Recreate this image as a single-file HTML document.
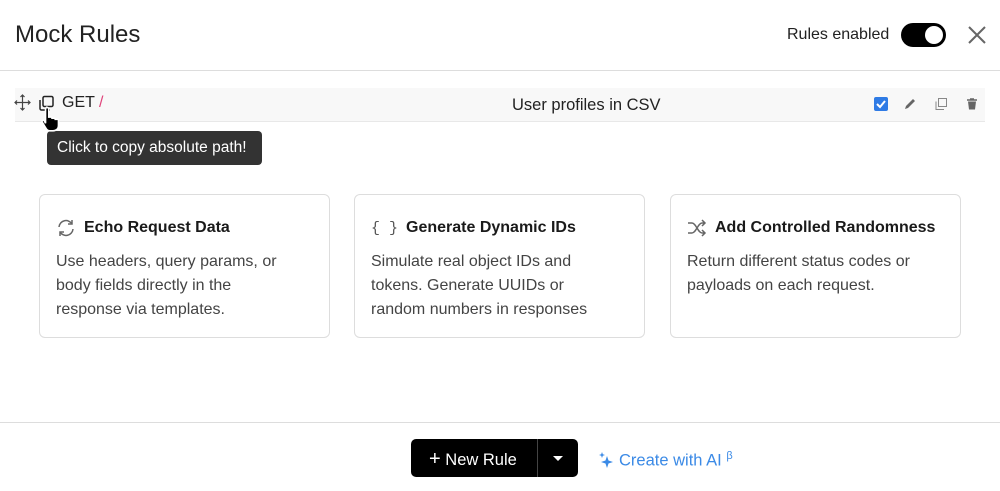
<!DOCTYPE html>
<html><head><style>
*{box-sizing:border-box;margin:0;padding:0}
body{width:1000px;height:491px;background:#fff;font-family:"Liberation Sans",sans-serif;color:#1a1a1a;position:relative;overflow:hidden}
.abs{position:absolute}
h1{position:absolute;left:15px;top:21px;font-size:24px;font-weight:normal;color:#222}
.card{position:absolute;top:194px;width:291px;height:144px;border:1px solid #ddd;border-radius:6px;padding:20px 16px}
.card .t{font-size:16px;font-weight:bold;display:flex;align-items:center;gap:8px;height:24px;position:relative;top:1px}
.card .d{margin-top:11px;font-size:16px;line-height:24px;color:#444;white-space:nowrap}
</style></head><body>
<h1>Mock Rules</h1>
<div class="abs" style="left:787px;top:26px;font-size:16px;color:#222">Rules enabled</div>
<div class="abs" style="left:901px;top:23px;width:45px;height:24px;border-radius:12px;background:#000"><div class="abs" style="left:24px;top:3px;width:18px;height:18px;border-radius:50%;background:#fff"></div></div>
<svg class="abs" style="left:967px;top:25px" width="20" height="20" viewBox="0 0 20 20"><path d="M2 2L18 18M18 2L2 18" stroke="#666" stroke-width="2"/></svg>
<div class="abs" style="left:0;top:70px;width:1000px;height:1px;background:#ddd"></div>

<div class="abs" style="left:15px;top:88px;width:970px;height:34px;background:#f8f8f8;border-bottom:1px solid #e8e8e8"></div>
<svg class="abs" style="left:14px;top:94px" width="17" height="17" viewBox="0 0 17 17"><path d="M8.5 1v15M1 8.5h15M6.5 3l2-2 2 2M6.5 14l2 2 2-2M3 6.5l-2 2 2 2M14 6.5l2 2-2 2" stroke="#444" stroke-width="1.2" fill="none"/></svg>
<svg class="abs" style="left:38px;top:95px" width="17" height="17" viewBox="0 0 17 17"><rect x="5" y="1.5" width="10" height="10" rx="1.5" stroke="#222" stroke-width="1.5" fill="none"/><path d="M2 5v8.5a1.5 1.5 0 0 0 1.5 1.5H12" stroke="#222" stroke-width="1.5" fill="none"/></svg>
<div class="abs" style="left:62px;top:94px;font-size:16px;color:#222">GET <span style="color:#e0457b">/</span></div>
<div class="abs" style="left:512px;top:96px;font-size:16.5px;color:#222">User profiles in CSV</div>
<div class="abs" style="left:874px;top:97px;width:14px;height:14px;border-radius:2px;background:#2f7be5"><svg width="14" height="14"><path d="M3 7l3 3 5-6" stroke="#fff" stroke-width="2" fill="none"/></svg></div>
<svg class="abs" style="left:903px;top:97px" width="14" height="14"><path d="M2 12l1-3 7-7 2 2-7 7z" fill="#666"/></svg>
<svg class="abs" style="left:934px;top:97px" width="14" height="14"><rect x="4.5" y="1.5" width="8" height="8" stroke="#888" fill="none"/><path d="M2 4.5v8h8" stroke="#888" fill="none"/></svg>
<svg class="abs" style="left:965px;top:97px" width="14" height="14"><path d="M2 3h10M5 2h4" stroke="#666" stroke-width="1.5"/><path d="M3 4.5h8l-1 8H4z" fill="#666"/></svg>
<div class="abs" style="left:47px;top:131px;width:215px;height:34px;background:#333;border-radius:4px;color:#fff;font-size:15.5px;padding:8px 10px;white-space:nowrap">Click to copy absolute path!</div>
<svg class="abs" style="left:39px;top:105px" width="26" height="28" viewBox="0 0 24 26"><path d="M7 2c1 0 2 1 2 2v8c0-1 3-1 3 0v1c0-1 3-1 3 0v1c0-1 3-1 3 0v5c0 3-2 5-5 5h-3c-2 0-3-1-4-3l-3-5c-1-1 1-3 2-1l1 2V4c0-1 1-2 1-2z" fill="#000" stroke="#fff" stroke-width="1.5"/></svg>

<div class="card" style="left:39px"><div class="t"><svg width="20" height="20" viewBox="0 0 20 20"><path d="M3 9a7 7 0 0 1 13-3M17 11a7 7 0 0 1-13 3" stroke="#666" stroke-width="1.5" fill="none"/><path d="M16 2v4h-4M4 18v-4h4" stroke="#666" stroke-width="1.5" fill="none"/></svg>Echo Request Data</div><div class="d">Use headers, query params, or<br>body fields directly in the<br>response via templates.</div></div>
<div class="card" style="left:354px"><div class="t"><span style="font-weight:normal;color:#555;font-family:'Liberation Mono',monospace;font-size:15px">{&nbsp;}</span>Generate Dynamic IDs</div><div class="d">Simulate real object IDs and<br>tokens. Generate UUIDs or<br>random numbers in responses</div></div>
<div class="card" style="left:670px"><div class="t"><svg width="20" height="20" viewBox="0 0 20 20"><path d="M1 5h4c4 0 6 10 10 10h3M1 15h4c4 0 6-10 10-10h3M15 2l3 3-3 3M15 12l3 3-3 3" stroke="#666" stroke-width="1.5" fill="none"/></svg>Add Controlled Randomness</div><div class="d">Return different status codes or<br>payloads on each request.</div></div>

<div class="abs" style="left:0;top:422px;width:1000px;height:1px;background:#ddd"></div>
<div class="abs" style="left:411px;top:439px;width:167px;height:38px;background:#000;border-radius:5px;color:#fff;font-size:16.5px">
<div class="abs" style="left:18px;top:9px"><span style="font-size:20px;font-weight:300">+</span> New Rule</div>
<div class="abs" style="left:126px;top:0;width:1px;height:38px;background:#444"></div>
<div class="abs" style="left:142px;top:17px;width:0;height:0;border-left:5px solid transparent;border-right:5px solid transparent;border-top:5px solid #fff"></div>
</div>
<svg class="abs" style="left:598px;top:451px" width="16" height="18" viewBox="0 0 16 18"><path d="M9 5l1.5 4.5L15 11l-4.5 1.5L9 17l-1.5-4.5L3 11l4.5-1.5z" fill="#3b8ae6"/><path d="M4 1l.8 2.2L7 4l-2.2.8L4 7l-.8-2.2L1 4l2.2-.8z" fill="#3b8ae6"/></svg>
<div class="abs" style="left:619px;top:450px;font-size:16.5px;color:#3b8ae6">Create with AI <sup style="font-size:11px">β</sup></div>
</body></html>
